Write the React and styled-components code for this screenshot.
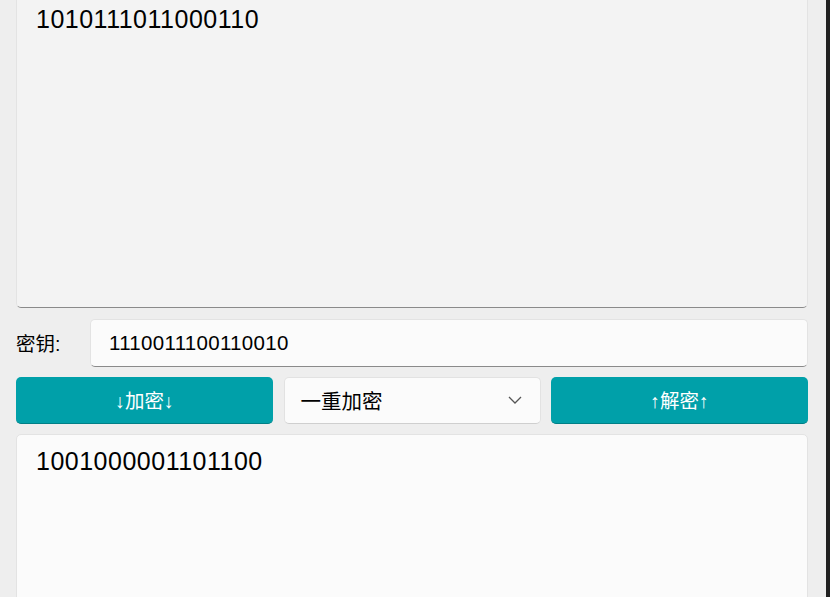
import React from "react";
import styled, { createGlobalStyle } from "styled-components";

const Global = createGlobalStyle`
  html, body { margin: 0; padding: 0; background: #eeeeee; overflow: hidden; }
  body { font-family: "Liberation Sans", "Noto Sans CJK SC", sans-serif; }
`;

const Window = styled.div`
  display: flex;
  width: 830px;
  height: 597px;
  overflow: hidden;
`;

const Main = styled.div`
  flex: 1;
  display: flex;
  flex-direction: column;
  gap: 10px;
  padding: 0 18px 0 16px;
  background: #eeeeee;
`;

const Edge = styled.div`
  width: 4px;
  background: #202020;
`;

const TextBox = styled.div`
  box-sizing: border-box;
  height: ${(p) => p.$h}px;
  flex-shrink: 0;
  background: ${(p) => p.$bg};
  border: 1px solid #e3e3e3;
  border-bottom: 1px solid ${(p) => p.$bottom};
  border-radius: ${(p) => p.$radius};
  border-top: ${(p) => (p.$cut ? "none" : "1px solid #e3e3e3")};
  padding: ${(p) => p.$pt}px 19px 0;
  font-size: 25px;
  line-height: 29px;
  color: #000;
  letter-spacing: 0.5px;
`;

const KeyRow = styled.div`
  display: flex;
  align-items: center;
  height: 48px;
  margin-top: 1px;
`;

const Label = styled.span`
  width: 74px;
  font-family: "Liberation Sans", "Noto Sans CJK SC", sans-serif;
  font-size: 19.5px;
  color: #000;
  padding-bottom: 1px;
`;

const KeyInput = styled.div`
  flex: 1;
  box-sizing: border-box;
  height: 48px;
  display: flex;
  align-items: center;
  padding: 0 18px 1px;
  background: #fbfbfb;
  border: 1px solid #e3e3e3;
  border-bottom: 1px solid #8a8a8a;
  border-radius: 5px;
  font-size: 20.5px;
  letter-spacing: 0.3px;
  color: #000;
`;

const Controls = styled.div`
  display: grid;
  grid-template-columns: 1fr 1fr 1fr;
  gap: 10.5px;
  height: 47px;
`;

const ActionButton = styled.button`
  box-sizing: border-box;
  height: 47px;
  border: none;
  border-bottom: 1px solid #007f86;
  border-radius: 5px;
  background: #00a0a9;
  color: #ffffff;
  font-family: "Liberation Sans", "Noto Sans CJK SC", sans-serif;
  font-size: 19.5px;
  padding: 0 0 2px;
`;

const Select = styled.div`
  box-sizing: border-box;
  height: 47px;
  display: flex;
  align-items: center;
  justify-content: space-between;
  padding: 0 18px 2px 16px;
  background: #fbfbfb;
  border: 1px solid #e2e2e2;
  border-bottom: 1px solid #cfcfcf;
  border-radius: 5px;
  font-family: "Noto Sans CJK SC", sans-serif;
  font-size: 20.5px;
  color: #000;
`;

const Chevron = () => (
  <svg width="14" height="8" viewBox="0 0 14 8">
    <path d="M1 1 L7 7 L13 1" fill="none" stroke="#555" strokeWidth="1.3" />
  </svg>
);

export default function App() {
  return (
    <>
      <Global />
      <Window>
        <Main>
          <TextBox $h={308} $bg="#f3f3f3" $bottom="#8a8a8a" $radius="0 0 5px 5px" $cut $pt={5}>
            1010111011000110
          </TextBox>
          <KeyRow>
            <Label>密钥:</Label>
            <KeyInput>1110011100110010</KeyInput>
          </KeyRow>
          <Controls>
            <ActionButton>↓加密↓</ActionButton>
            <Select>
              <span>一重加密</span>
              <Chevron />
            </Select>
            <ActionButton>↑解密↑</ActionButton>
          </Controls>
          <TextBox $h={200} $bg="#fbfbfb" $bottom="#e3e3e3" $radius="5px 5px 0 0" $pt={12}>
            1001000001101100
          </TextBox>
        </Main>
        <Edge />
      </Window>
    </>
  );
}
